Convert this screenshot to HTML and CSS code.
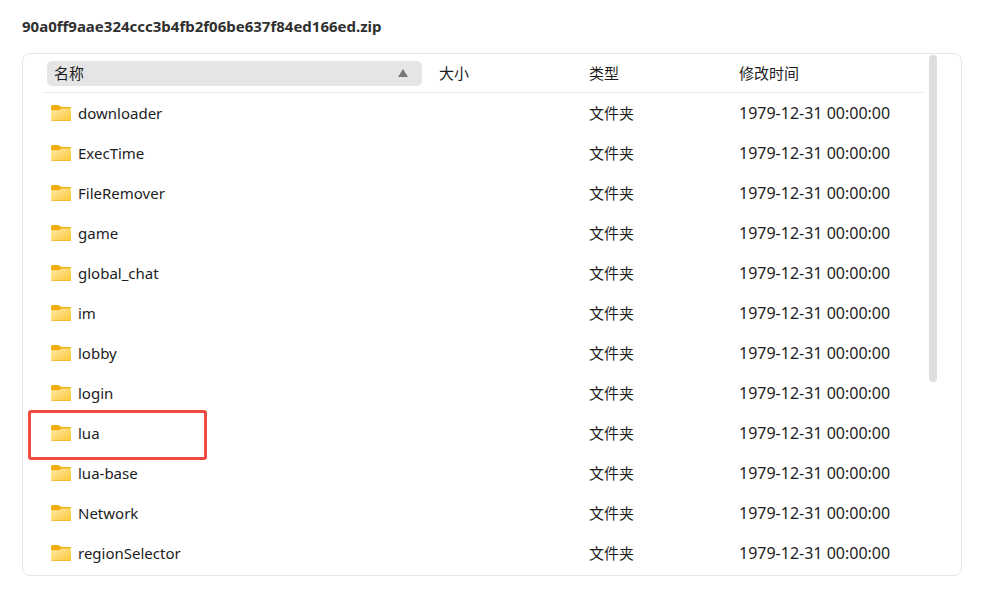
FILE: index.html
```html
<!DOCTYPE html>
<html lang="zh-CN">
<head>
  <meta charset="UTF-8">
  <meta name="viewport" content="width=device-width, initial-scale=1.0">
  <title>90a0ff9aae324ccc3b4fb2f06be637f84ed166ed.zip</title>
  <link rel="stylesheet" href="styles.css">
</head>
<body>
  <svg class="defs" aria-hidden="true">
    <defs>
      <linearGradient id="front" x1="0" y1="0" x2="1" y2="1">
        <stop offset="0" stop-color="#ffe9a6"/>
        <stop offset="1" stop-color="#fec837"/>
      </linearGradient>
    </defs>
    <symbol id="folder" viewBox="0 0 22 18">
      <path d="M1 2.5Q1 1 2.5 1H8Q9 1 9.700 1.700L11.200 3H19.500Q21 3 21 4.500V9H1Z" fill="#f3ae0b"/>
      <path d="M1 6.200H8.200Q9 6.200 9.600 5.700L10.500 5Q11 4.500 11.800 4.500H20Q21 4.500 21 5.500V15.500Q21 17 19.500 17H2.500Q1 17 1 15.500Z" fill="url(#front)"/>
      <path d="M1 15.300Q1 17 2.500 17H19.500Q21 17 21 15.300Q20.700 16.200 19.500 16.200H2.500Q1.300 16.200 1 15.300Z" fill="#eeb22b"/>
    </symbol>
  </svg>

  <main class="container">
    <h1>90a0ff9aae324ccc3b4fb2f06be637f84ed166ed.zip</h1>

    <div class="panel">
      <table class="files">
        <thead>
          <tr>
            <th class="name" aria-sort="ascending">
              <button type="button" class="sort">
                <span>名称</span>
                <svg class="arrow" viewBox="0 0 10 8" aria-hidden="true"><path d="M5 0L10 8H0Z" fill="#777"/></svg>
              </button>
            </th>
            <th class="size">大小</th>
            <th class="type">类型</th>
            <th class="date">修改时间</th>
          </tr>
        </thead>
        <tbody id="rows"></tbody>
      </table>
      <div class="scrollbar"></div>
    </div>
  </main>

  <script>
    const folders = [
      'downloader', 'ExecTime', 'FileRemover', 'game', 'global_chat', 'im',
      'lobby', 'login', 'lua', 'lua-base', 'Network', 'regionSelector'
    ];
    const marked = 'lua';

    document.getElementById('rows').innerHTML = folders.map(name => `
      <tr class="${name === marked ? 'marked' : ''}">
        <td>
          <div class="entry">
            <svg class="folder" aria-hidden="true"><use href="#folder"/></svg>
            <span>${name}</span>
          </div>
        </td>
        <td></td>
        <td>文件夹</td>
        <td class="time">1979-12-31 00:00:00</td>
      </tr>
    `).join('');
  </script>
</body>
</html>
```
FILE: styles.css
```css
*,
*::after {
  box-sizing: border-box;
}

body {
  margin: 0;
  background: #fff;
  color: #1c1c1c;
  font-family: "Noto Sans", "Noto Sans CJK SC", sans-serif;
  font-size: 15px;
  line-height: 24px;
}

.defs {
  position: absolute;
  width: 0;
  height: 0;
}

.container {
  padding: 14px 20px 14px 22px;
}

h1 {
  margin: 0 0 15px;
  color: #303030;
  font-size: 15px;
  font-weight: bold;
}

.panel {
  position: relative;
  padding: 0 37px 2px 19px;
  border: 1px solid #e5e5e5;
  border-radius: 8px;
}

.files {
  width: 100%;
  table-layout: fixed;
  border-collapse: separate;
  border-spacing: 0;
}

th {
  height: 39px;
  padding: 0;
  border-bottom: 1px solid #ececec;
  font-weight: normal;
  text-align: left;
}

.size,
.type {
  width: 150px;
}

.date {
  width: 185px;
}

.sort {
  display: flex;
  align-items: center;
  justify-content: space-between;
  width: calc(100% - 22px);
  height: 25px;
  margin-left: 5px;
  padding: 0 14px 0 7px;
  border: 0;
  border-radius: 5px;
  background: #e5e5e5;
  color: inherit;
  font: inherit;
}

.arrow {
  width: 10px;
  height: 8px;
}

td {
  height: 40px;
  padding: 0;
}

.entry {
  display: flex;
  align-items: center;
  gap: 6px;
  padding-left: 8px;
}

.folder {
  width: 22px;
  height: 18px;
}

.time {
  font-size: 16px;
}

.marked td:first-child {
  position: relative;
}

.marked td:first-child::after {
  content: "";
  position: absolute;
  top: -3px;
  left: -14px;
  width: 179px;
  height: 50px;
  border: 3px solid #f04a40;
  border-radius: 3px;
}

.scrollbar {
  position: absolute;
  top: 1px;
  right: 24px;
  width: 8px;
  height: 327px;
  border-radius: 4px;
  background: #dedede;
}
```
